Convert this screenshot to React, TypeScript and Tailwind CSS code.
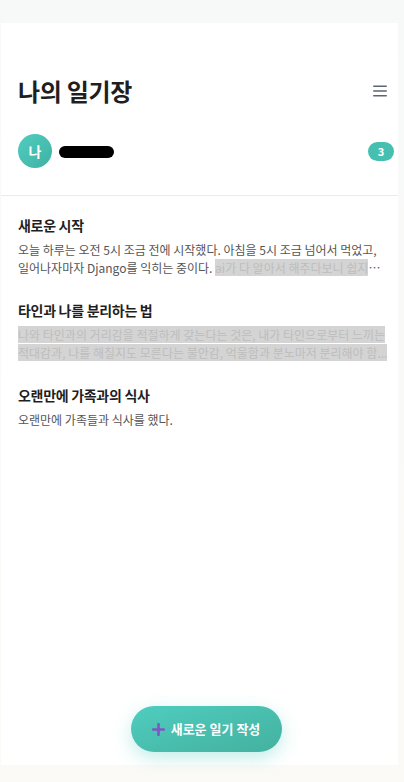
const entries = [
  {
    title: '새로운 시작',
    body: '오늘 하루는 오전 5시 조금 전에 시작했다. 아침을 5시 조금 넘어서 먹었고, 일어나자마자 Django를 익히는 중이다. ',
    hidden: 'ai가 다 알아서 해주다보니 쉽지만',
  },
  {
    title: '타인과 나를 분리하는 법',
    body: '',
    hidden:
      '나와 타인과의 거리감을 적절하게 갖는다는 것은, 내가 타인으로부터 느끼는 적대감과, 나를 해칠지도 모른다는 불안감, 억울함과 분노마저 분리해야 함',
  },
  {
    title: '오랜만에 가족과의 식사',
    body: '오랜만에 가족들과 식사를 했다.',
    hidden: '',
  },
]

export default function App() {
  return (
    <div
      className="min-h-[782px] w-[404px] bg-gradient-to-b from-[#f7f9f9] to-[#fcfaf6] pt-[23px] pb-[17px]"
      style={{ fontFamily: '"Noto Sans CJK KR", "Noto Sans", sans-serif' }}
    >
      <div className="ml-px mr-[6px] flex h-[742px] flex-col bg-white">
        <header className="flex items-center justify-between pl-[17px] pr-[11px] pt-[50px]">
          <h1 className="text-[24px] font-bold leading-[36px] tracking-[-0.3px] text-[#1f1f1f]">나의 일기장</h1>
          <svg width="14" height="12" viewBox="0 0 14 12">
            <rect x="0" y="0.5" width="14" height="1.6" rx="0.8" fill="#5f6470" />
            <rect x="0" y="5.2" width="14" height="1.6" rx="0.8" fill="#5f6470" />
            <rect x="0" y="9.9" width="14" height="1.6" rx="0.8" fill="#5f6470" />
          </svg>
        </header>

        <div className="flex items-center justify-between border-b border-[#ebebeb] pb-[27px] pl-[17px] pr-[4px] pt-[25px]">
          <div className="flex items-center gap-[7px]">
            <div className="flex h-[34px] w-[34px] items-center justify-center rounded-full bg-gradient-to-br from-[#4fcdbf] to-[#3fb2a4] text-[14px] font-bold text-white">
              나
            </div>
            <span className="mt-[2px] block h-[12px] w-[55px] rounded-[6px] bg-black" />
          </div>
          <span className="flex h-[19px] w-[26px] items-center justify-center rounded-full bg-[#45bfb0] text-[11px] font-bold text-white">
            3
          </span>
        </div>

        <div className="flex flex-1 flex-col gap-[22px] pl-[17px] pr-[10px] pt-[18px]">
          {entries.map((e) => (
            <div key={e.title}>
              <h2 className="text-[14px] font-bold leading-[22px] tracking-[-0.3px] text-[#1f1f1f]">{e.title}</h2>
              <p className="mt-[5px] line-clamp-2 text-[12px] leading-[18px] text-[#555]">
                {e.body}
                {e.hidden && <span className="bg-[#d4d4d4] text-[#bdbdbd]">{e.hidden}...</span>}
              </p>
            </div>
          ))}
        </div>

        <div className="flex justify-center pb-[13px] pl-[13px]">
          <button className="flex h-[46px] w-[151px] items-center justify-center gap-[6px] rounded-full bg-gradient-to-br from-[#4fcdbf] to-[#44b19f] text-[13px] font-bold text-white shadow-[0_6px_18px_rgba(78,205,191,0.35)]">
            <svg width="13" height="13" viewBox="0 0 13 13">
              <rect x="5.2" y="0" width="2.6" height="13" rx="1" fill="#7e57c2" />
              <rect x="0" y="5.2" width="13" height="2.6" rx="1" fill="#7e57c2" />
            </svg>
            새로운 일기 작성
          </button>
        </div>
      </div>
    </div>
  )
}
